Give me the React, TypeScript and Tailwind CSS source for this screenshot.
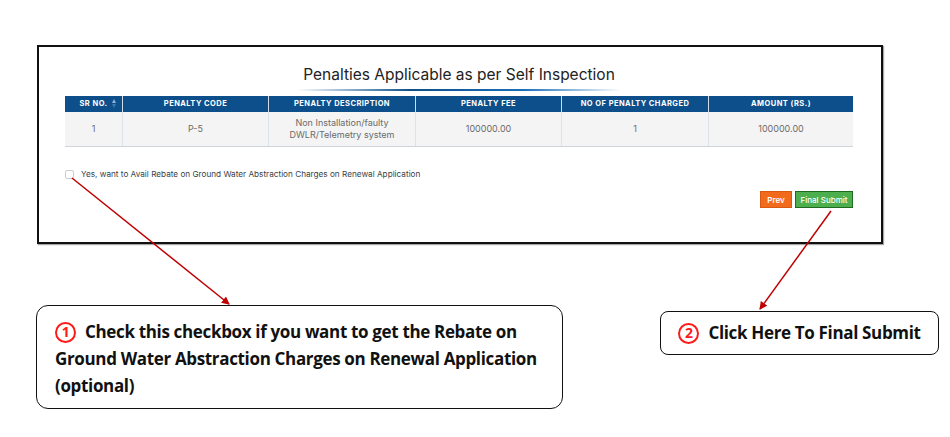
import React from "react";

const cols = [
  { label: "SR NO.", w: "w-[57px]" },
  { label: "PENALTY CODE", w: "w-[146px]" },
  { label: "PENALTY DESCRIPTION", w: "w-[147px]" },
  { label: "PENALTY FEE", w: "w-[146px]" },
  { label: "NO OF PENALTY CHARGED", w: "w-[147px]" },
  { label: "AMOUNT (RS.)", w: "w-[145px]" },
];

function Num({ n }: { n: string }) {
  return (
    <span className="inline-flex w-[21px] h-[21px] rounded-full border-2 border-[#ff1a1a] text-[#ff1a1a] text-[14px] leading-none font-bold items-center justify-center align-[1px] mr-[9px]">
      {n}
    </span>
  );
}

export default function App() {
  return (
    <div className="relative w-[950px] h-[437px] bg-white overflow-hidden" style={{ fontFamily: "Inter, 'Noto Sans', sans-serif" }}>
      {/* Panel */}
      <div className="ml-[37px] mt-[45px] w-[846px] h-[199px] border-2 border-[#111] bg-white pl-[26px] pr-[28px] pt-[18px] shadow-[1px_1px_1px_rgba(0,0,0,0.35)]">
        <div className="flex flex-col items-center">
          <div className="text-[15.5px] leading-[20px] text-[#222]">
            Penalties Applicable as per Self Inspection
          </div>
          <div className="mt-[4px] h-[2px] w-[324px] bg-[linear-gradient(90deg,rgba(13,79,139,0)_0%,#0d4f8b_35%,#1b6fb8_70%,rgba(13,79,139,0)_100%)]" />
        </div>
        <div className="mt-[5px] w-[788px]">
          <div className="flex h-[16px] bg-[#0d4f8b]">
            {cols.map((c, i) => (
              <div
                key={i}
                className={`${c.w} relative flex items-center justify-center text-[7.5px] font-bold tracking-[0.06em] text-white ${i > 0 ? "border-l border-[#d5dbe3]" : ""}`}
              >
                {c.label}
                {i === 0 && (
                  <span className="absolute right-[6px] top-[3px] flex flex-col gap-[1px]">
                    <span className="block w-0 h-0 border-l-[2.5px] border-r-[2.5px] border-b-[4px] border-l-transparent border-r-transparent border-b-[#8fb0d3]" />
                    <span className="block w-0 h-0 border-l-[2.5px] border-r-[2.5px] border-t-[4px] border-l-transparent border-r-transparent border-t-[#3e78b0]" />
                  </span>
                )}
              </div>
            ))}
          </div>
          <div className="flex h-[35px] bg-[#f4f4f4] border-b border-[#d0d5db] text-[9px] leading-[12px] text-[#6b6b6b]">
            {["1", "P-5", "", "100000.00", "1", "100000.00"].map((v, i) => (
              <div key={i} className={`${cols[i].w} flex items-center justify-center text-center ${i > 0 ? "border-l border-[#dde2e8]" : ""}`}>
                {i === 2 ? (
                  <span>
                    Non Installation/faulty
                    <br />
                    DWLR/Telemetry system
                  </span>
                ) : (
                  v
                )}
              </div>
            ))}
          </div>
        </div>
        <div className="mt-[21px] flex items-center gap-[7px]">
          <div className="w-[9px] h-[9px] border border-[#c9ced4] rounded-[2px] bg-white" />
          <span className="text-[8.2px] text-[#3a3f47]">
            Yes, want to Avail Rebate on Ground Water Abstraction Charges on Renewal Application
          </span>
        </div>
        <div className="mt-[11px] flex justify-end gap-[3px]">
          <button className="h-[17px] w-[32px] bg-[#f26b1d] border border-[#d85a12] text-white text-[8px] font-semibold flex items-center justify-center">
            Prev
          </button>
          <button className="h-[17px] w-[58px] bg-[#4cae4c] border border-[#1f6b1f] text-white text-[8px] font-medium flex items-center justify-center">
            Final Submit
          </button>
        </div>
      </div>

      {/* Callouts */}
      <div className="flex items-start mt-[61px]">
        <div className="ml-[36px] w-[527px] h-[104px] border-[1.5px] border-[#111] rounded-[12px] pl-[18px] pt-[12px] text-[17px] leading-[27px] font-bold text-[#111]" style={{ fontFamily: "'Open Sans', 'Noto Sans', sans-serif", letterSpacing: "-0.02em" }}>
          <Num n="1" />Check this checkbox if you want to get the Rebate on
          <br />
          Ground Water Abstraction Charges on Renewal Application
          <br />
          (optional)
        </div>
        <div className="ml-[97px] mt-[6px] w-[279px] h-[44px] border-[1.5px] border-[#111] rounded-[8px] flex items-center justify-center text-[17px] font-bold text-[#111]" style={{ fontFamily: "'Open Sans', 'Noto Sans', sans-serif", letterSpacing: "-0.02em" }}>
          <Num n="2" />Click Here To Final Submit
        </div>
      </div>

      {/* Arrows */}
      <svg className="absolute left-0 top-0 pointer-events-none" width="950" height="437">
        <defs>
          <marker id="ah" markerWidth="8" markerHeight="8" refX="7" refY="4" orient="auto" markerUnits="userSpaceOnUse">
            <path d="M0,0 L8,4 L0,8 Z" fill="#c00000" />
          </marker>
        </defs>
        <line x1="72" y1="178" x2="229" y2="304" stroke="#c00000" strokeWidth="1.5" markerEnd="url(#ah)" />
        <line x1="831" y1="211" x2="760" y2="309" stroke="#c00000" strokeWidth="1.5" markerEnd="url(#ah)" />
      </svg>
    </div>
  );
}
